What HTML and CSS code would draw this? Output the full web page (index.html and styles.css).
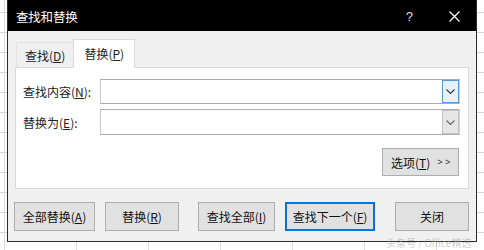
FILE: index.html
```html
<!DOCTYPE html>
<html lang="zh-CN">
<head>
<meta charset="utf-8">
<title>查找和替换</title>
<link rel="stylesheet" href="styles.css">
</head>
<body>
<div class="sheet">
  <div class="dialog">
    <div class="titlebar">
      <span class="title">查找和替换</span>
      <div class="title-actions">
        <span class="help">?</span>
        <svg class="close" width="11" height="11" viewBox="0 0 11 11"><path d="M0.5 0.5 L10.5 10.5 M10.5 0.5 L0.5 10.5" stroke="#fff" stroke-width="1.2" fill="none"/></svg>
      </div>
    </div>
    <div class="body">
      <div class="tabs">
        <div class="tab">查找(<u>D</u>)</div>
        <div class="tab active">替换(<u>P</u>)</div>
      </div>
      <div class="panel">
        <div class="row">
          <label class="label">查找内容(<u>N</u>):</label>
          <div class="combo">
            <div class="combo-text"></div>
            <div class="drop focus"><svg width="9" height="5" viewBox="0 0 9 5"><path d="M0.5 0.5 L4.5 4.5 L8.5 0.5" stroke="#333" stroke-width="1.1" fill="none"/></svg></div>
          </div>
        </div>
        <div class="row row2">
          <label class="label">替换为(<u>E</u>):</label>
          <div class="combo tall">
            <div class="combo-text"></div>
            <div class="drop"><svg width="9" height="5" viewBox="0 0 9 5"><path d="M0.5 0.5 L4.5 4.5 L8.5 0.5" stroke="#666" stroke-width="1.1" fill="none"/></svg></div>
          </div>
        </div>
        <div class="options-row">
          <button class="btn options">选项(<u>T</u>)<span class="arrows">&gt; &gt;</span></button>
        </div>
      </div>
      <div class="buttons">
        <div class="group">
          <button class="btn w81">全部替换(<u>A</u>)</button>
          <button class="btn w74">替换(<u>R</u>)</button>
        </div>
        <div class="group g2">
          <button class="btn w77">查找全部(<u>I</u>)</button>
          <button class="btn w90 default">查找下一个(<u>F</u>)</button>
        </div>
        <button class="btn w74 close-btn">关闭</button>
      </div>
    </div>
  </div>
  <div class="watermark">头条号 / Office精选</div>
</div>
</body>
</html>
```

FILE: styles.css
```css
* { box-sizing: border-box; }
html, body { margin: 0; padding: 0; }
body {
  width: 484px;
  height: 250px;
  overflow: hidden;
  font-family: "Noto Sans CJK SC", "Noto Sans", sans-serif;
  font-size: 12px;
  color: #111;
}
.sheet {
  position: relative;
  width: 484px;
  height: 250px;
  background-color: #fff;
  background-image:
    linear-gradient(to bottom, #d6d6d6 1px, transparent 1px),
    linear-gradient(to right, #dcdcdc 1px, transparent 1px);
  background-size: 100% 20px, 72px 100%;
  background-position: 0 12px, 4px 0;
  display: flex;
  align-items: flex-start;
}
.dialog {
  margin-left: 7px;
  width: 470px;
  height: 242px;
  border: 1px solid #2b2b2b;
  border-top-color: #000;
  background: #f0f0f0;
  display: flex;
  flex-direction: column;
}
.titlebar {
  height: 30px;
  background: #000;
  color: #fff;
  display: flex;
  align-items: center;
  justify-content: space-between;
  padding-left: 8px;
  padding-right: 16px;
}
.title { font-size: 12.5px; letter-spacing: -0.2px; }
.title-actions { display: flex; align-items: center; gap: 36px; }
.help { font-family: "Liberation Sans", sans-serif; font-size: 13px; color: #ddd; }
.close { display: block; }
.body {
  padding-top: 9px;
  display: flex;
  flex-direction: column;
}
.tabs {
  display: flex;
  align-items: flex-end;
  height: 28px;
  padding-left: 8px;
  margin-bottom: -1px;
  position: relative;
  z-index: 1;
}
.tab {
  height: 26px;
  padding: 0 8px;
  display: flex;
  align-items: center;
  border: 1px solid #e2e2e2;
  border-bottom: none;
  border-right: none;
  color: #222;
}
.tab.active {
  height: 29px;
  padding: 0 10px 1px 10px;
  background: #fff;
  border: 1px solid #d9d9d9;
  border-bottom: none;
}
.panel {
  margin: 0 7px;
  height: 122px;
  background: #fff;
  border: 1px solid #d9d9d9;
  padding: 11px 8px 0 7px;
  display: flex;
  flex-direction: column;
}
.row { display: flex; align-items: center; }
.row2 { margin-top: 5px; }
.label { width: 77px; color: #222; }
.combo {
  flex: 1;
  height: 25px;
  border: 1px solid #acacac;
  border-left-color: #c8c8c8;
  border-right-color: #d0d0d0;
  display: flex;
  background: #fff;
}
.combo.tall { height: 26px; }
.combo-text { flex: 1; }
.drop {
  width: 17px;
  display: flex;
  align-items: center;
  justify-content: center;
  background: #e6e6e6;
  border: 1px solid #c4c4c4;
}
.drop.focus {
  background: #e5f1fb;
  border: 1px solid #5a9ad8;
}
.options-row {
  display: flex;
  justify-content: flex-end;
  margin-top: 13px;
  padding-right: 1px;
}
.btn {
  font-family: "Noto Sans CJK SC", "Noto Sans", sans-serif;
  font-size: 12px;
  color: #111;
  height: 29px;
  background: #e1e1e1;
  border: 1px solid #adadad;
  padding: 0;
  display: flex;
  align-items: center;
  justify-content: center;
}
.options { width: 77px; height: 28px; justify-content: flex-start; padding-left: 8px; }
.arrows {
  font-family: "Liberation Sans", sans-serif;
  font-size: 9px;
  margin-left: 7px;
  letter-spacing: 0;
  color: #333;
}
.buttons {
  margin-top: 13px;
  padding-left: 6px;
  display: flex;
}
.group { display: flex; gap: 10px; }
.g2 { margin-left: 19px; }
.close-btn { margin-left: 20px; }
.w81 { width: 81px; }
.w74 { width: 74px; }
.w77 { width: 77px; }
.w90 { width: 90px; }
.default { border: 2px solid #0078d7; }
.watermark {
  position: absolute;
  left: 386px;
  top: 237px;
  height: 12px;
  line-height: 12px;
  font-size: 10px;
  color: rgba(150, 150, 150, 0.5);
  white-space: nowrap;
}
```
